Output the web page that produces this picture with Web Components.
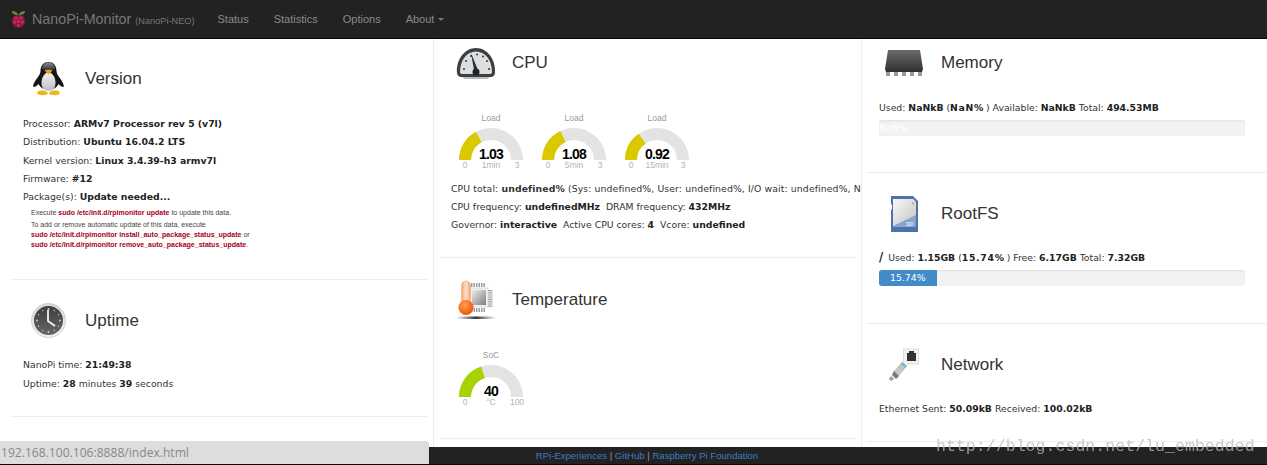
<!DOCTYPE html>
<html>
<head>
<meta charset="utf-8">
<title>NanoPi-Monitor</title>
<style>
  html, body { margin: 0; height: 100%; overflow: hidden; background: #fff; }
  body { display: flex; flex-direction: column; height: 465px; font-family: "DejaVu Sans", sans-serif; }
</style>
</head>
<body>
<nm-navbar></nm-navbar>
<nm-columns>
  <nm-column kind="first">
    <nm-panel title="Version" icon="penguin" height="240" top="22" head="35" gap="19">
      <nm-line>Processor: <b>ARMv7 Processor rev 5 (v7l)</b></nm-line>
      <nm-line>Distribution: <b>Ubuntu 16.04.2 LTS</b></nm-line>
      <nm-line>Kernel version: <b>Linux 3.4.39-h3 armv7l</b></nm-line>
      <nm-line>Firmware: <b>#12</b></nm-line>
      <nm-line>Package(s): <b>Update needed...</b></nm-line>
      <nm-note>
        <div>Execute <code>sudo /etc/init.d/rpimonitor update</code> to update this data.</div>
        <div>To add or remove automatic update of this data, execute</div>
        <div><code>sudo /etc/init.d/rpimonitor install_auto_package_status_update</code> or</div>
        <div><code>sudo /etc/init.d/rpimonitor remove_auto_package_status_update</code>.</div>
      </nm-note>
    </nm-panel>
    <nm-panel title="Uptime" icon="clock" height="136" top="23" head="35" gap="17" lh="19">
      <nm-line>NanoPi time: <b>21:49:38</b></nm-line>
      <nm-line>Uptime: <b>28</b> minutes <b>39</b> seconds</nm-line>
    </nm-panel>
  </nm-column>

  <nm-column kind="mid">
    <nm-panel title="CPU" icon="dial" height="218" top="8" head="31" gap="34" lh="18" offset="11">
      <nm-gauges>
        <nm-gauge label="Load" value="1.03" min="0" max="3" unit="1min" color="#dbc900"></nm-gauge>
        <nm-gauge label="Load" value="1.08" min="0" max="3" unit="5min" color="#dbc900"></nm-gauge>
        <nm-gauge label="Load" value="0.92" min="0" max="3" unit="15min" color="#dbc900"></nm-gauge>
      </nm-gauges>
      <nm-line><span style="letter-spacing:.11px">CPU total: <b>undefined%</b> (Sys: undefined%, User: undefined%, I/O wait: undefined%, N</span></nm-line>
      <nm-line>CPU frequency: <b>undefinedMHz</b>&nbsp; DRAM frequency: <b>432MHz</b></nm-line>
      <nm-line>Governor: <b>interactive</b>&nbsp; Active CPU cores: <b>4</b>&nbsp; Vcore: <b>undefined</b></nm-line>
    </nm-panel>
    <nm-panel title="Temperature" icon="thermo" height="180" top="22" head="39" gap="30" offset="11">
      <nm-gauges>
        <nm-gauge label="SoC" value="40" min="0" max="100" unit="°C" color="#a5d200"></nm-gauge>
      </nm-gauges>
    </nm-panel>
  </nm-column>

  <nm-column kind="last">
    <nm-panel title="Memory" icon="ram" height="133" top="9" head="30" gap="21">
      <nm-line>Used: <b>NaNkB</b> (<b style="letter-spacing:.7px;margin-right:2px">NaN%</b>) Available: <b>NaNkB</b> Total: <b>494.53MB</b></nm-line>
      <nm-progress value="0" label="NaN%" style="margin-top:3px"></nm-progress>
    </nm-panel>
    <nm-panel title="RootFS" icon="sd" height="150" top="23" head="36" gap="16">
      <nm-line><b style="font-size:11.5px;margin-right:2px">/</b> Used: <b>1.15GB</b> (<b style="letter-spacing:.7px;margin-right:2px">15.74%</b>) Free: <b>6.17GB</b> Total: <b>7.32GB</b></nm-line>
      <nm-progress value="15.74" label="15.74%"></nm-progress>
    </nm-panel>
    <nm-panel title="Network" icon="plug" height="117" top="24" head="34" gap="18">
      <nm-line>Ethernet Sent: <b>50.09kB</b> Received: <b>100.02kB</b></nm-line>
    </nm-panel>
  </nm-column>
</nm-columns>
<nm-footer></nm-footer>
<nm-status>192.168.100.106:8888/index.html</nm-status>
<nm-watermark>http://blog.csdn.net/lu_embedded</nm-watermark>

<script>
const ICONS = {
  berry: `<svg width="15" height="18" viewBox="0 0 15 18">
    <path d="M7 4C5 1 2 1 1 1c0 3 3 4 6 4zM8 4c2-3 5-3 6-3 0 3-3 4-6 4z" fill="#5f8f4a"/>
    <ellipse cx="7.500" cy="11" rx="6.500" ry="6.600" fill="#8c1a40"/>
    <g fill="#c42a5e"><circle cx="5" cy="8" r="1.600"/><circle cx="10" cy="8" r="1.600"/><circle cx="3.600" cy="12" r="1.600"/><circle cx="7.500" cy="11.500" r="1.700"/><circle cx="11.400" cy="12" r="1.600"/><circle cx="7.500" cy="15.400" r="1.400"/></g>
  </svg>`,
  penguin: `<svg width="35" height="35" viewBox="0 0 35 35">
    <defs><linearGradient id="h" x1="0" y1="0" x2="0" y2="1"><stop offset="0" stop-color="#8e8e8e"/><stop offset="1" stop-color="#2a2a2a"/></linearGradient>
    <linearGradient id="b" x1="0" y1="0" x2="0" y2="1"><stop offset="0" stop-color="#f4f4f6"/><stop offset="1" stop-color="#bcbcc4"/></linearGradient></defs>
    <path d="M17.500 1c-6 0-8 5-8 9 0 3-2 5-4 8-2 3-4 6-3 8 2 0 4-2 5-3 1 2 3 4 5 5h10c2-1 4-3 5-5 1 1 3 3 5 3 1-2-1-5-3-8-2-3-4-5-4-8 0-4-2-9-8-9z" fill="#161616"/>
    <path d="M17.500 1.500c-4 0-6 2.500-6.500 6 2 3 11 3 13 0-.5-3.500-2.500-6-6.500-6z" fill="url(#h)"/>
    <path d="M17.500 11c-4 1-7 5.500-7 11 0 5 3 8 7 8s7-3 7-8c0-5.500-3-10-7-11z" fill="url(#b)"/>
    <path d="M10 29.500c-3 0-4.500 2-3.500 3.500s9 1.500 10.500 0c0-2-3-4-7-3.500zM25 29.500c3 0 4.500 2 3.500 3.500s-9 1.500-10.500 0c0-2 3-4 7-3.500z" fill="#e9b81f"/>
    <path d="M13.500 9.500c2-1 6-1 8 0l-4 4z" fill="#f0a020"/>
  </svg>`,
  clock: `<svg width="35" height="35" viewBox="0 0 35 35">
    <defs><linearGradient id="r" x1="0" y1="0" x2="0" y2="1"><stop offset="0" stop-color="#d8d8d8"/><stop offset="1" stop-color="#f2f2f2"/></linearGradient>
    <linearGradient id="f" x1="0" y1="0" x2="0" y2="1"><stop offset="0" stop-color="#3e3e3e"/><stop offset="1" stop-color="#666"/></linearGradient></defs>
    <circle cx="17.500" cy="17.500" r="17" fill="url(#r)" stroke="#c4c4c4" stroke-width=".7"/>
    <circle cx="17.500" cy="17.500" r="14.500" fill="url(#f)"/>
    <g fill="#ccc"><circle cx="17.500" cy="6" r="1"/><circle cx="17.500" cy="29" r="1"/><circle cx="6" cy="17.500" r="1"/><circle cx="29" cy="17.500" r="1"/><circle cx="11.700" cy="7.500" r=".7"/><circle cx="23.300" cy="7.500" r=".7"/><circle cx="7.500" cy="11.700" r=".7"/><circle cx="27.500" cy="11.700" r=".7"/><circle cx="7.500" cy="23.300" r=".7"/><circle cx="27.500" cy="23.300" r=".7"/><circle cx="11.700" cy="27.500" r=".7"/><circle cx="23.300" cy="27.500" r=".7"/></g>
    <path d="M17 7v11l7 5" fill="none" stroke="#f4f4f4" stroke-width="1.800"/>
  </svg>`,
  dial: `<svg width="40" height="32" viewBox="0 0 40 32">
    <path d="M1 26C0 12 9 1 20 1s20 11 19 25c0 2-2 4-4 4H5c-2 0-4-2-4-4z" fill="#3b3f42"/>
    <path d="M4 25C4 13 11 4.500 20 4.500S36 13 36 25c0 1-1 2-2 2H6c-1 0-2-1-2-2z" fill="#dcdedf"/>
    <g fill="#33383b"><circle cx="8" cy="22" r="1"/><circle cx="10" cy="14" r="1"/><circle cx="15" cy="9" r="1"/><circle cx="21" cy="7.500" r="1"/><circle cx="27" cy="9.500" r="1"/><circle cx="31" cy="14" r="1"/><circle cx="33" cy="22" r="1"/></g>
    <path d="M15 6l6.500 16-3.500 1z" fill="#2c3033"/>
    <circle cx="20" cy="25" r="3.500" fill="#1e2224"/>
    <path d="M6 30h28l-3 2H9z" fill="#b9b9b9"/>
  </svg>`,
  thermo: `<svg width="41" height="40" viewBox="0 0 41 40">
    <defs><linearGradient id="c" x1="0" y1="0" x2="1" y2="1"><stop offset="0" stop-color="#ececec"/><stop offset="1" stop-color="#7f7f7f"/></linearGradient>
    <linearGradient id="t" x1="0" y1="0" x2="1" y2="0"><stop offset="0" stop-color="#f3a368"/><stop offset=".5" stop-color="#fde3cc"/><stop offset="1" stop-color="#f3a368"/></linearGradient>
    <radialGradient id="o" cx=".4" cy=".35" r=".7"><stop offset="0" stop-color="#ffa050"/><stop offset="1" stop-color="#ea4f06"/></radialGradient>
    <linearGradient id="s" x1="0" y1="0" x2="1" y2="0"><stop offset="0" stop-color="#444" stop-opacity="0"/><stop offset=".5" stop-color="#333"/><stop offset="1" stop-color="#444" stop-opacity="0"/></linearGradient></defs>
    <path d="M15 5h14M15 30h14" stroke="#9c9c9c" stroke-width="4" stroke-dasharray="1.500 1" fill="none"/>
    <path d="M34 10v17" stroke="#9c9c9c" stroke-width="5" stroke-dasharray="1 .8" fill="none"/>
    <rect x="14" y="8" width="18" height="19" fill="#f2f2f2" stroke="#c4c4c4" stroke-width=".5"/>
    <rect x="16" y="10" width="14" height="15" fill="url(#c)"/>
    <rect x="5.500" y="1" width="9" height="26" rx="4.500" fill="url(#t)" stroke="#eea873" stroke-width=".6"/>
    <circle cx="10" cy="27.500" r="7.500" fill="url(#o)"/>
    <rect x="0" y="36.500" width="40" height="2.500" fill="url(#s)"/>
  </svg>`,
  ram: `<svg width="40" height="28" viewBox="0 0 40 28">
    <defs><linearGradient id="m" x1="0" y1="0" x2="0" y2="1"><stop offset="0" stop-color="#6a6a6a"/><stop offset="1" stop-color="#303030"/></linearGradient></defs>
    <path d="M4 1h32l3 19-1 3H2l-1-3z" fill="url(#m)"/>
    <g fill="#9a9a9a"><rect x="2" y="23" width="4" height="4"/><rect x="10" y="23" width="4" height="4"/><rect x="18" y="23" width="4" height="4"/><rect x="26" y="23" width="4" height="4"/><rect x="34" y="23" width="4" height="4"/></g>
  </svg>`,
  sd: `<svg width="28" height="36" viewBox="0 0 28 36">
    <defs><linearGradient id="l" x1="0" y1="0" x2="1" y2="1"><stop offset="0" stop-color="#f8f8f8"/><stop offset="1" stop-color="#c4c4c4"/></linearGradient></defs>
    <path d="M1 0h22l5 5v31H1V14l1-1V9L1 8z" fill="#4d74a8"/>
    <path d="M3 3h20l3 3v25H3z" fill="#86a4cd"/>
    <path d="M3 3h20l3 3v13L3 30z" fill="url(#l)"/>
    <rect x="22" y="6" width="2" height="2.500" fill="#e3a5a0"/>
    <text x="16" y="30" font-family="Liberation Sans, sans-serif" font-size="5" font-style="italic" font-weight="bold" fill="#e8eef6">SD</text>
  </svg>`,
  plug: `<svg width="34" height="34" viewBox="0 0 34 34">
    <rect x="16.500" y="1" width="15" height="15" fill="#f1f1f1" stroke="#ddd"/>
    <path d="M20 5h2V3h5v2h2v8h-9z" fill="#333"/>
    <path d="M15 14l5 4-8 10-5.500-4.500z" fill="#c6c9c6"/>
    <path d="M15 14l5 4-1.500 2-5-4z" fill="#7fb6d0"/>
    <path d="M12.500 17l5 4-1.500 2-5-4z" fill="#a7d6a2"/>
    <path d="M7 23l5 5-3 3-4-4z" fill="#7a7a7a"/>
    <path d="M4 28l3 3-3 2-2-2z" fill="#999"/>
  </svg>`
};

// every element gets its shadow root the same way
class NmBase extends HTMLElement {
  render(html) {
    if (!this.shadowRoot) this.attachShadow({ mode: "open" });
    this.shadowRoot.innerHTML = html;
  }
}

class NmNavbar extends NmBase {
  connectedCallback() {
    this.render(`<style>
      :host { display: flex; align-items: center; flex: none; height: 38px; background: #222; border-bottom: 1px solid #080808; color: #777; font: 11px "Liberation Sans", sans-serif; }
      .logo { display: flex; margin-left: 11px; }
      .brand { margin-left: 6px; font-size: 14.300px; white-space: nowrap; }
      small { font-size: 9.200px; }
      nav { display: flex; gap: 25px; margin-left: 23px; color: #8a8a8a; }
      .caret { display: inline-block; margin-left: 4px; vertical-align: 2px; border: 3px solid transparent; border-top-color: #777; border-bottom: 0; }
    </style>
    <span class="logo">${ICONS.berry}</span>
    <span class="brand">NanoPi-Monitor <small>(NanoPi-NEO)</small></span>
    <nav><span>Status</span><span>Statistics</span><span>Options</span><span>About<i class="caret"></i></span></nav>`);
  }
}

class NmColumns extends NmBase {
  connectedCallback() {
    this.render(`<style>
      :host { display: grid; grid-template-columns: 433px 428px 406px; flex: 1; min-height: 0; overflow: hidden; }
    </style><slot></slot>`);
  }
}

class NmColumn extends NmBase {
  connectedCallback() {
    const kind = this.getAttribute("kind");
    const pad = kind == "first" ? "0 5px 0 11px" : kind == "mid" ? "0 5px 0 5px" : "0 0 0 5px";
    this.render(`<style>
      :host { display: block; overflow: hidden; padding: ${pad}; border-left: ${kind == "first" ? "0" : "1px solid #eee"}; }
    </style><slot></slot>`);
  }
}

class NmPanel extends NmBase {
  connectedCallback() {
    const a = n => this.getAttribute(n);
    this.render(`<style>
      :host { display: block; box-sizing: content-box; height: ${a("height")}px; padding: 0 0 0 12px; border-bottom: 1px solid #eee; color: #333; font: 9.300px/18.300px "DejaVu Sans", sans-serif; --lh: ${a("lh") || 18.3}px; }
      header { display: flex; align-items: center; height: ${a("head")}px; padding-top: ${a("top")}px; margin-bottom: ${a("gap")}px; }
      .icon { display: flex; justify-content: center; width: 50px; margin-right: ${a("offset") || 12}px; }
      h2 { margin: 0; font: 17px "Liberation Sans", sans-serif; color: #333; }
    </style>
    <header><span class="icon">${ICONS[a("icon")]}</span><h2>${a("title")}</h2></header>
    <slot></slot>`);
  }
}

class NmLine extends NmBase {
  connectedCallback() {
    this.render(`<style>
      :host { display: block; white-space: nowrap; height: var(--lh, 18.300px); line-height: var(--lh, 18.300px); }
      ::slotted(b) { font-weight: bold; color: #222; }
    </style><slot></slot>`);
  }
}

class NmNote extends NmBase {
  connectedCallback() {
    this.render(`<style>
      :host { display: block; margin: 2px 0 0 8px; color: #444; font: 7px/10px "Liberation Sans", sans-serif; white-space: nowrap; --code: #a5001a; }
      ::slotted(div) { height: 10px; }
      ::slotted(div:first-child) { height: 11.500px; }
    </style><slot></slot>`);
    // code sits one level down in the light DOM, a ::slotted rule cannot reach it
    this.querySelectorAll("code").forEach(c => {
      c.style.cssText = "font:inherit;font-weight:bold;color:var(--code)";
    });
  }
}

class NmGauges extends NmBase {
  connectedCallback() {
    this.render(`<style>
      :host { display: flex; gap: 19px; padding: 0 0 9px 8px; }
    </style><slot></slot>`);
  }
}

// half ring gauge, same shape as the one the monitor draws
class NmGauge extends NmBase {
  connectedCallback() {
    const a = n => this.getAttribute(n);
    const min = +a("min"), max = +a("max"), val = +a("value");
    const t = Math.PI * (1 - (val - min) / (max - min));
    const R = 32, r = 20, c = 32;
    const x = (q) => (c + q * Math.cos(t)).toFixed(2);
    const y = (q) => (c - q * Math.sin(t)).toFixed(2);
    const track = `M0 32A32 32 0 0 1 64 32H52A20 20 0 0 0 12 32Z`;
    const fill = `M0 32A${R} ${R} 0 0 1 ${x(R)} ${y(R)}L${x(r)} ${y(r)}A${r} ${r} 0 0 0 12 32Z`;
    this.render(`<style>
      :host { display: block; width: 64px; font: 8.500px "Liberation Sans", sans-serif; color: #b3b3b3; }
      .title { text-align: center; color: #999; line-height: 12px; margin-bottom: 4px; }
      .ring { position: relative; height: 32px; }
      svg { display: block; }
      .value { position: absolute; left: 0; right: 0; bottom: -3px; text-align: center; font: bold 14px/18px "Liberation Sans", sans-serif; letter-spacing: -.8px; color: #010101; }
      .scale { display: flex; justify-content: space-between; line-height: 11px; }
      .scale span { width: 12px; white-space: nowrap; display: flex; justify-content: center; }
    </style>
    <div class="title">${a("label")}</div>
    <div class="ring">
      <svg width="64" height="32" viewBox="0 0 64 32"><path d="${track}" fill="#e3e3e3"/><path d="${fill}" fill="${a("color")}"/></svg>
      <div class="value">${a("value")}</div>
    </div>
    <div class="scale"><span>${min}</span><span>${a("unit")}</span><span>${max}</span></div>`);
  }
}

class NmProgress extends NmBase {
  connectedCallback() {
    const v = this.getAttribute("value");
    this.render(`<style>
      :host { display: block; width: 366px; height: 16px; margin-top: 4px; border-radius: 3px; background: #f3f3f3; box-shadow: inset 0 1px 2px rgba(0,0,0,.08); overflow: hidden; font: 9.300px/16px "DejaVu Sans", sans-serif; color: #fff; }
      div { width: ${v}%; height: 100%; background: ${+v ? "#428bca" : "transparent"}; text-align: center; white-space: nowrap; }
    </style><div>${this.getAttribute("label")}</div>`);
  }
}

class NmFooter extends NmBase {
  connectedCallback() {
    this.render(`<style>
      :host { display: block; flex: none; height: 17px; background: #222; border-bottom: 1px solid #080808; color: #999; text-align: center; font: 9.570px/17px "Liberation Sans", sans-serif; padding-left: 27px; }
      a { color: #3b7cc2; text-decoration: none; }
    </style><a>RPi-Experiences</a> | <a>GitHub</a> | <a>Raspberry Pi Foundation</a>`);
  }
}

class NmStatus extends NmBase {
  connectedCallback() {
    this.render(`<style>
      :host { position: fixed; left: 0; bottom: 1px; width: 428px; height: 23px; padding-left: 1px; background: #ddd; border-top-right-radius: 3px; color: #888; font: 12.100px/23px "Open Sans", sans-serif; }
    </style><slot></slot>`);
  }
}

class NmWatermark extends NmBase {
  connectedCallback() {
    this.render(`<style>
      :host { position: fixed; left: 936px; top: 436px; color: rgba(185,185,185,.75); font: 16.600px/22px "Liberation Mono", monospace; white-space: nowrap; }
    </style><slot></slot>`);
  }
}

customElements.define("nm-navbar", NmNavbar);
customElements.define("nm-columns", NmColumns);
customElements.define("nm-column", NmColumn);
customElements.define("nm-panel", NmPanel);
customElements.define("nm-line", NmLine);
customElements.define("nm-note", NmNote);
customElements.define("nm-gauges", NmGauges);
customElements.define("nm-gauge", NmGauge);
customElements.define("nm-progress", NmProgress);
customElements.define("nm-footer", NmFooter);
customElements.define("nm-status", NmStatus);
customElements.define("nm-watermark", NmWatermark);
</script>
</body>
</html>
